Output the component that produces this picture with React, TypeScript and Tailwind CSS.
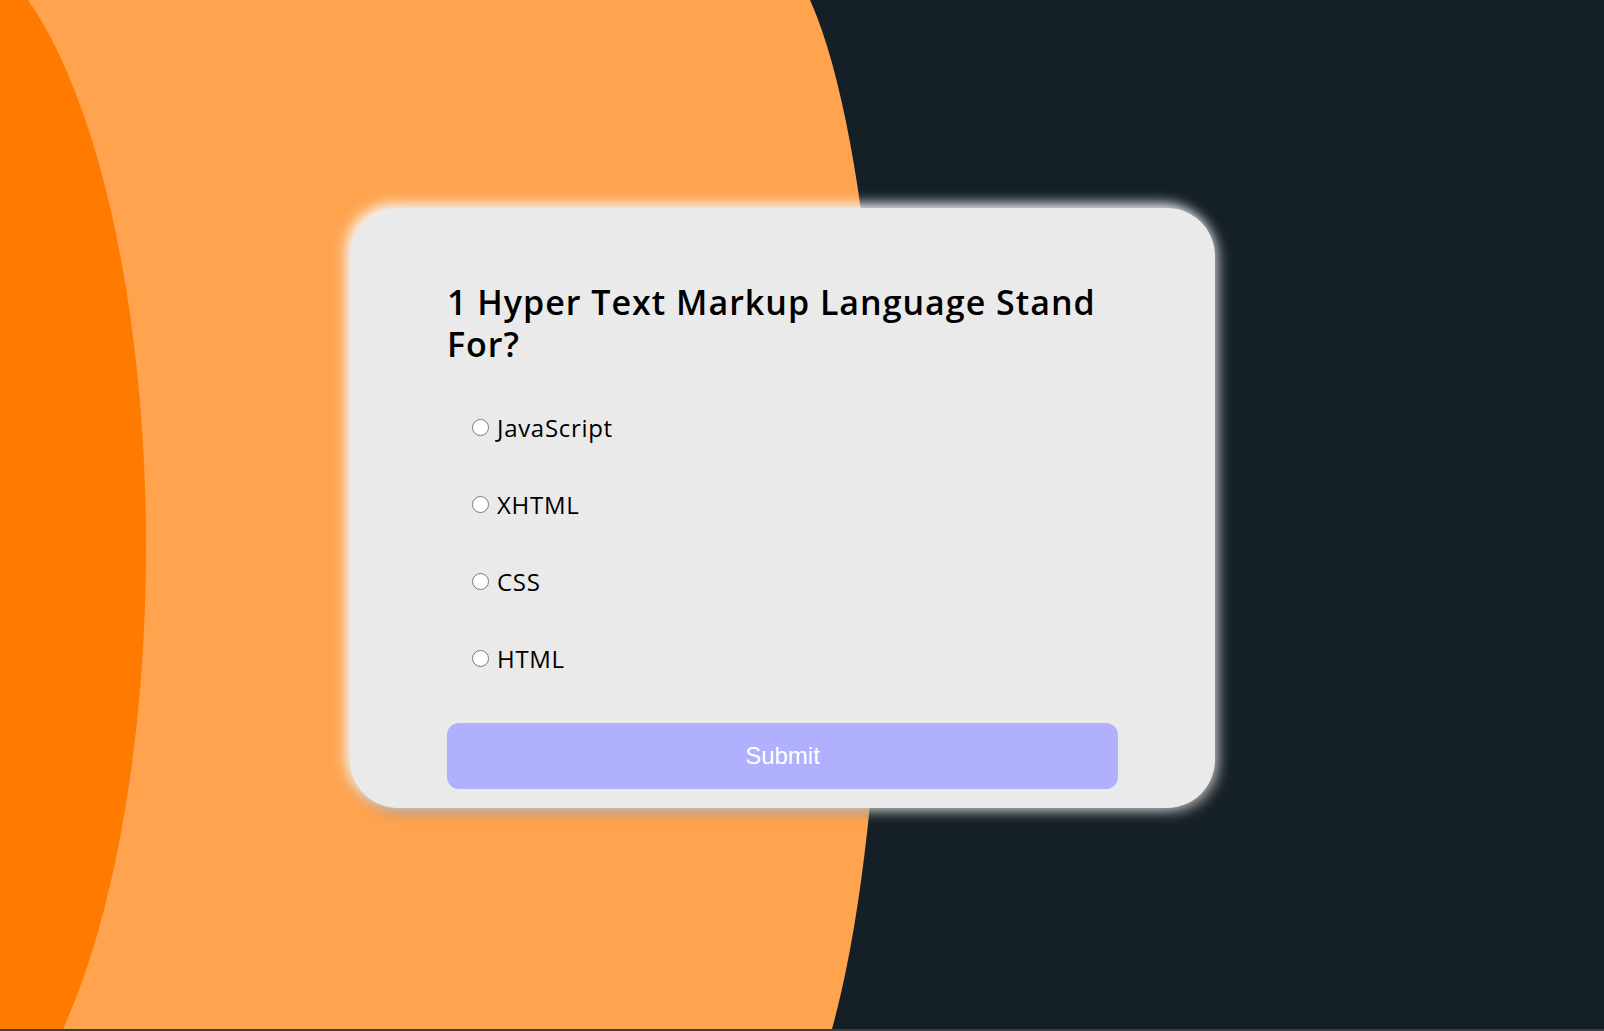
import React from "react";

const options = ["JavaScript", "XHTML", "CSS", "HTML"];

export default function App() {
  return (
    <div className="w-[1604px] h-[1031px] overflow-hidden flex flex-col bg-[#3b3e42]">
      <div className="relative h-[1029px] bg-[#141f26]">
        <svg
          className="absolute inset-0"
          width="1604"
          height="1029"
          viewBox="0 0 1604 1029"
        >
          <rect x="0" y="0" width="760" height="1029" fill="#ffa34f" />
          <ellipse cx="759" cy="546" rx="123" ry="600" fill="#ffa34f" />
          <ellipse cx="-67" cy="546" rx="213" ry="610" fill="#ff7b00" />
        </svg>
        <div className="relative pl-[350px] pt-[208px]">
          <div className="w-[865px] h-[600px] rounded-[48px] bg-[#eaeaea] px-[97px] pt-[73px] shadow-[-4px_-4px_14px_rgba(255,255,255,0.95),4px_4px_14px_rgba(150,150,150,0.95)]">
            <h2 className="text-[34px] leading-[42px] tracking-[1px] text-black font-semibold font-['Open_Sans',sans-serif]">
              1 Hyper Text Markup Language Stand For?
            </h2>
            <div className="mt-[24px] flex flex-col">
              {options.map((o) => (
                <label
                  key={o}
                  className="h-[77px] flex items-center pl-[25px] gap-[8px]"
                >
                  <input
                    type="radio"
                    name="q"
                    className="w-[17px] h-[17px] m-0"
                  />
                  <span className="text-[24px] leading-[33px] tracking-[0.7px] text-black font-['Open_Sans',sans-serif]">
                    {o}
                  </span>
                </label>
              ))}
            </div>
            <button className="mt-[26px] w-full h-[66px] rounded-[12px] bg-[#b0b0ff] text-white text-[24px] font-['Liberation_Sans',Arial,sans-serif]">
              Submit
            </button>
          </div>
        </div>
      </div>
      <div className="h-[2px] bg-[#3b3e42]" />
    </div>
  );
}
